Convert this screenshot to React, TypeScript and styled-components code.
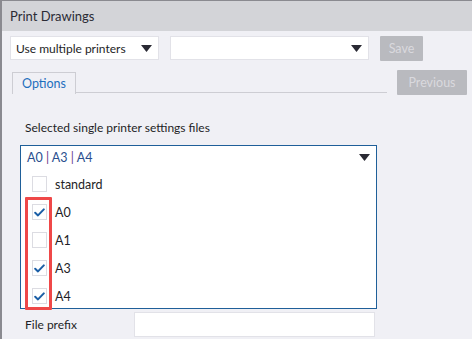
import React from "react";
import styled, { createGlobalStyle } from "styled-components";

const GlobalStyle = createGlobalStyle`
  html, body {
    margin: 0;
    padding: 0;
    width: 472px;
    height: 339px;
    overflow: hidden;
    background: #f0f0f5;
    font-family: "Lato", "Noto Sans", sans-serif;
    font-size: 12px;
    color: #1e1e26;
  }
`;

const Caret = () => (
  <svg width="11" height="7" viewBox="0 0 11 7">
    <path d="M0 0h11L5.5 7z" fill="#2a2a33" />
  </svg>
);

const Check = () => (
  <svg width="11" height="9" viewBox="0 0 11 9">
    <path d="M1.2 4.8 4 7.4 9.8 1.4" fill="none" stroke="#1a5ea6" strokeWidth="2" strokeLinecap="round" strokeLinejoin="round" />
  </svg>
);

const printers = [
  { name: "standard", checked: false },
  { name: "A0", checked: true },
  { name: "A1", checked: false },
  { name: "A3", checked: true },
  { name: "A4", checked: true },
];

export default function App() {
  return (
    <>
      <GlobalStyle />
      <Window>
        <TitleBar>Print Drawings</TitleBar>
        <Toolbar>
          <Select $width={149}>
            <span>Use multiple printers</span>
            <Caret />
          </Select>
          <Select $width={199}>
            <span />
            <Caret />
          </Select>
          <GrayButton $width={43}>Save</GrayButton>
        </Toolbar>
        <TabRow>
          <Tab>Options</Tab>
          <TabLine />
          <GrayButton $width={70}>Previous</GrayButton>
        </TabRow>
        <Content>
          <FieldLabel>Selected single printer settings files</FieldLabel>
          <Panel>
            <PanelHead>
              <Selected>A0 <Sep>|</Sep> A3 <Sep>|</Sep> A4</Selected>
              <Caret />
            </PanelHead>
            <List>
              {printers.map((p) => (
                <Item key={p.name}>
                  <Box>{p.checked && <Check />}</Box>
                  <span>{p.name}</span>
                </Item>
              ))}
            </List>
            <Highlight />
          </Panel>
          <PrefixRow>
            <PrefixLabel>File prefix</PrefixLabel>
            <Input />
          </PrefixRow>
        </Content>
      </Window>
    </>
  );
}

const Window = styled.div`
  width: 470px;
  height: 338px;
  border-left: 2px solid #8a8a90;
  border-top: 1px solid #8a8a90;
  background: #f0f0f5;
  display: flex;
  flex-direction: column;
`;

const TitleBar = styled.div`
  height: 30px;
  background: #d3d4d8;
  display: flex;
  align-items: center;
  padding-left: 8px;
  color: #2b2b35;
  font-size: 13px;
`;

const Toolbar = styled.div`
  display: flex;
  gap: 11px;
  padding: 5px 0 0 8px;
  height: 24px;
`;

const Select = styled.div<{ $width: number }>`
  width: ${(p) => p.$width}px;
  height: 24px;
  box-sizing: border-box;
  background: #fff;
  border: 1px solid #e2e2e8;
  display: flex;
  align-items: center;
  justify-content: space-between;
  padding: 0 6px 0 5px;
`;

const GrayButton = styled.div<{ $width: number }>`
  width: ${(p) => p.$width}px;
  height: 25px;
  box-sizing: border-box;
  background: #b9babf;
  color: #d9d9de;
  display: flex;
  align-items: center;
  justify-content: center;
  border-radius: 1px;
  font-size: 12.5px;
`;

const TabRow = styled.div`
  display: flex;
  align-items: flex-start;
  padding: 10px 5px 0 10px;
  height: 25px;
`;

const Tab = styled.div`
  width: 64px;
  height: 22px;
  margin-top: 2px;
  box-sizing: border-box;
  border: 1px solid #cdcdd3;
  border-bottom: none;
  display: flex;
  align-items: center;
  justify-content: center;
  color: #1e6fbd;
  font-size: 12.5px;
`;

const TabLine = styled.div`
  width: 311px;
  height: 1px;
  margin-top: 22px;
  margin-right: 10px;
  background: #cdcdd3;
`;

const Content = styled.div`
  display: flex;
  flex-direction: column;
  padding: 24px 0 0 18px;
`;

const FieldLabel = styled.div`
  padding-left: 5px;
  height: 18px;
  line-height: 18px;
`;

const Panel = styled.div`
  position: relative;
  margin-top: 8px;
  width: 357px;
  height: 164px;
  box-sizing: border-box;
  border: 1px solid #1f5f99;
  background: #fff;
`;

const PanelHead = styled.div`
  height: 22px;
  display: flex;
  align-items: center;
  justify-content: space-between;
  padding: 0 6px 0 6px;
  font-size: 12.5px;
`;

const Selected = styled.span`
  color: #2a4f8e;
`;

const Sep = styled.span`
  color: #6a3c8c;
`;

const List = styled.div`
  display: flex;
  flex-direction: column;
  padding: 2px 0 0 11px;
`;

const Item = styled.div`
  height: 28px;
  display: flex;
  align-items: center;
  gap: 8px;
  font-size: 12.5px;
`;

const Box = styled.div`
  width: 15px;
  height: 16px;
  box-sizing: border-box;
  border: 1px solid #dcdce2;
  background: #fff;
  display: flex;
  align-items: center;
  justify-content: center;
`;

const Highlight = styled.div`
  position: absolute;
  left: 4px;
  top: 51px;
  width: 27px;
  height: 113px;
  box-sizing: border-box;
  border: 3px solid #ef4848;
  border-radius: 1px;
`;

const PrefixRow = styled.div`
  display: flex;
  align-items: center;
  margin-top: 3px;
  height: 25px;
`;

const PrefixLabel = styled.div`
  width: 109px;
  padding-left: 5px;
`;

const Input = styled.div`
  width: 241px;
  height: 25px;
  box-sizing: border-box;
  background: #fff;
  border: 1px solid #e2e2e8;
`;
